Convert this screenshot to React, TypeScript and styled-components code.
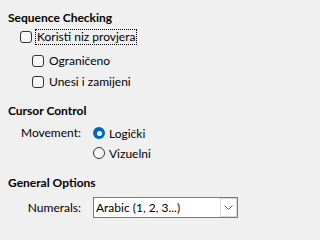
import React from 'react';
import styled, { createGlobalStyle } from 'styled-components';

const Global = createGlobalStyle`
  html, body {
    margin: 0;
    padding: 0;
    background: #f0f0f0;
  }
  body {
    font-family: Lato, "Noto Sans", sans-serif;
    font-size: 12px;
    color: #000;
  }
`;

const Page = styled.div`
  display: flex;
  flex-direction: column;
  width: 247px;
  height: 227px;
  padding: 9px 0 0 8px;
  box-sizing: border-box;
  overflow: hidden;
`;

const Heading = styled.div<{ $top?: number }>`
  height: 18px;
  line-height: 18px;
  font-weight: 700;
  margin-top: ${(p) => p.$top ?? 0}px;
`;

const CheckRow = styled.label<{ $indent: number; $top?: number }>`
  display: flex;
  align-items: center;
  gap: 4px;
  height: 20px;
  margin-left: ${(p) => p.$indent}px;
  margin-top: ${(p) => p.$top ?? 0}px;
`;

const Box = styled.span`
  width: 12px;
  height: 12px;
  box-sizing: border-box;
  border: 1px solid #333;
  border-radius: 3px;
  background: #f7f7f7;
  flex: none;
`;

const Caption = styled.span<{ $focused?: boolean }>`
  padding: 0 1px;
  line-height: 14px;
  outline: ${(p) => (p.$focused ? '1px dotted #000' : 'none')};
`;

const OptionGrid = styled.div<{ $top?: number }>`
  display: grid;
  grid-template-columns: 73px 1fr;
  column-gap: 12px;
  margin-top: ${(p) => p.$top ?? 0}px;
`;

const FieldLabel = styled.div<{ $h: number }>`
  text-align: right;
  height: ${(p) => p.$h}px;
  line-height: ${(p) => p.$h}px;
`;

const RadioRow = styled.label`
  display: flex;
  align-items: center;
  gap: 4px;
  height: 20px;
  grid-column: 2;
`;

const Radio = styled.span<{ $checked?: boolean }>`
  width: 12px;
  height: 12px;
  box-sizing: border-box;
  border-radius: 50%;
  flex: none;
  display: flex;
  align-items: center;
  justify-content: center;
  border: ${(p) => (p.$checked ? 'none' : '1px solid #333')};
  background: ${(p) => (p.$checked ? '#0067c0' : '#f7f7f7')};

  &::after {
    content: '';
    display: ${(p) => (p.$checked ? 'block' : 'none')};
    width: 5px;
    height: 5px;
    border-radius: 50%;
    background: #fff;
  }
`;

const Combo = styled.div`
  display: flex;
  align-items: stretch;
  width: 145px;
  height: 21px;
  box-sizing: border-box;
  border: 1px solid #7a7a7a;
  background: #fff;
`;

const ComboText = styled.span`
  flex: 1;
  padding-left: 2px;
  line-height: 19px;
  white-space: nowrap;
`;

const DropButton = styled.span`
  width: 17px;
  box-sizing: border-box;
  border: 1px solid #dadada;
  display: flex;
  align-items: center;
  justify-content: center;
`;

export default function App() {
  return (
    <>
      <Global />
      <Page>
        <Heading>Sequence Checking</Heading>
        <CheckRow $indent={12}>
          <Box />
          <Caption $focused>Koristi niz provjera</Caption>
        </CheckRow>
        <CheckRow $indent={24} $top={4}>
          <Box />
          <Caption>Ograničeno</Caption>
        </CheckRow>
        <CheckRow $indent={24} $top={1}>
          <Box />
          <Caption>Unesi i zamijeni</Caption>
        </CheckRow>

        <Heading $top={10}>Cursor Control</Heading>
        <OptionGrid $top={3}>
          <FieldLabel $h={20}>Movement:</FieldLabel>
          <RadioRow>
            <Radio $checked />
            <span>Logički</span>
          </RadioRow>
          <RadioRow>
            <Radio />
            <span>Vizuelni</span>
          </RadioRow>
        </OptionGrid>

        <Heading $top={11}>General Options</Heading>
        <OptionGrid $top={5}>
          <FieldLabel $h={21}>Numerals:</FieldLabel>
          <Combo>
            <ComboText>Arabic (1, 2, 3...)</ComboText>
            <DropButton>
              <svg width="9" height="5" viewBox="0 0 9 5">
                <path d="M0.5 0.5 L4.5 4.5 L8.5 0.5" fill="none" stroke="#606060" strokeWidth="1" />
              </svg>
            </DropButton>
          </Combo>
        </OptionGrid>
      </Page>
    </>
  );
}
